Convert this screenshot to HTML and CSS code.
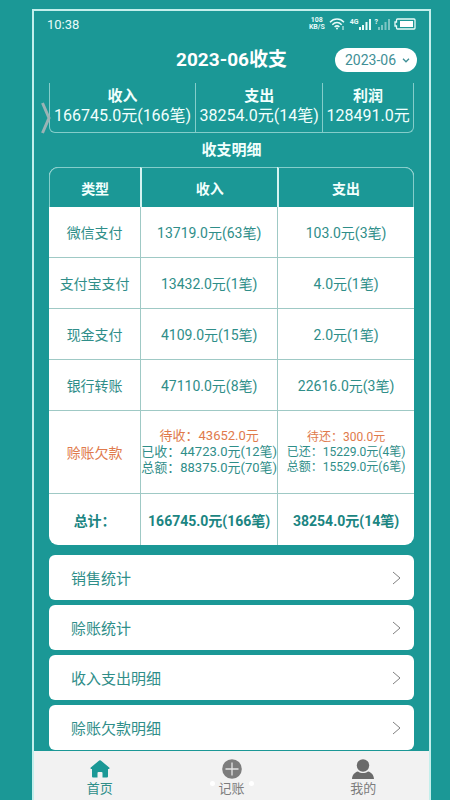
FILE: index.html
```html
<!DOCTYPE html>
<html lang="zh-CN">
<head>
  <meta charset="UTF-8">
  <meta name="viewport" content="width=device-width, initial-scale=1.0">
  <title>2023-06收支</title>
  <link rel="stylesheet" href="styles.css">
</head>
<body>
  <div class="phone">
    <div class="status-bar">
      <span class="time">10:38</span>
      <div class="status-icons">
        <div class="speed"><span>108</span><span>KB/S</span></div>
        <svg width="17" height="12" viewBox="0 0 17 12" fill="none" stroke="#e9fbf9" stroke-width="1.5">
          <path d="M1 4.2C5 0 11 0 15 4.2M3.3 6.7c2.8-2.8 6.6-2.8 9.4 0M5.6 9c1.4-1.4 3.4-1.4 4.8 0"/>
          <circle cx="8" cy="10.6" r="1" fill="#e9fbf9" stroke="none"/>
          <path d="M14 8v4" stroke-width="1"/>
        </svg>
        <div class="signal">
          <span>4G</span>
          <svg width="12" height="11" viewBox="0 0 12 11" fill="#e9fbf9">
            <path d="M0 8h2v3H0zM3 6h2v5H3zM6.5 3h2v8h-2zM10 0h2v11h-2z"/>
          </svg>
        </div>
        <div class="signal">
          <span>?</span>
          <svg width="12" height="11" viewBox="0 0 12 11" fill="#7cc5c3">
            <path d="M0 8h2v3H0zM3 6h2v5H3zM6.5 3h2v8h-2zM10 0h2v11h-2z"/>
          </svg>
        </div>
        <svg width="22" height="12" viewBox="0 0 22 12">
          <path d="M3.5 1H20a1 1 0 0 1 1 1v8a1 1 0 0 1-1 1H3.5a1 1 0 0 1-1-1V8H1V4h1.500V2a1 1 0 0 1 1-1z" fill="none" stroke="#e9fbf9" stroke-width="1.3"/>
          <path d="M6 3h13v6H6z" fill="#fff"/>
        </svg>
      </div>
    </div>

    <header class="header">
      <h1>2023-06收支</h1>
      <div class="month">
        <select aria-label="月份">
          <option>2023-06</option>
        </select>
        <svg width="8" height="5" viewBox="0 0 8 5" fill="none" stroke="#3f8f96" stroke-width="1.3">
          <path d="M1 .8l3 3 3-3"/>
        </svg>
      </div>
    </header>

    <main class="content">
      <section class="summary">
        <div class="summary-item"><h2>收入</h2><p>166745.0元(166笔)</p></div>
        <div class="summary-item"><h2>支出</h2><p>38254.0元(14笔)</p></div>
        <div class="summary-item"><h2>利润</h2><p>128491.0元</p></div>
        <button class="drawer" aria-label="展开">
          <svg width="10" height="32" viewBox="0 0 10 32" fill="none" stroke="#9bb3b5" stroke-width="3">
            <path d="M1.500 1l6.500 15-6.500 15"/>
          </svg>
        </button>
      </section>

      <h2 class="section-title">收支明细</h2>

      <table class="detail">
        <thead>
          <tr><th class="type">类型</th><th>收入</th><th>支出</th></tr>
        </thead>
        <tbody>
          <tr><td>微信支付</td><td>13719.0元(63笔)</td><td>103.0元(3笔)</td></tr>
          <tr><td>支付宝支付</td><td>13432.0元(1笔)</td><td>4.0元(1笔)</td></tr>
          <tr><td>现金支付</td><td>4109.0元(15笔)</td><td>2.0元(1笔)</td></tr>
          <tr><td>银行转账</td><td>47110.0元(8笔)</td><td>22616.0元(3笔)</td></tr>
          <tr class="debt">
            <td class="due">赊账欠款</td>
            <td class="income"><p class="due">待收：43652.0元</p><p>已收：44723.0元(12笔)</p><p>总额：88375.0元(70笔)</p></td>
            <td class="expense"><p class="due">待还：300.0元</p><p>已还：15229.0元(4笔)</p><p>总额：15529.0元(6笔)</p></td>
          </tr>
          <tr class="total"><td>总计：</td><td>166745.0元(166笔)</td><td>38254.0元(14笔)</td></tr>
        </tbody>
      </table>

      <nav class="links">
        <a href="#"><span>销售统计</span><svg width="9" height="14" viewBox="0 0 9 14"><path d="M1 1l7 6-7 6"/></svg></a>
        <a href="#"><span>赊账统计</span><svg width="9" height="14" viewBox="0 0 9 14"><path d="M1 1l7 6-7 6"/></svg></a>
        <a href="#"><span>收入支出明细</span><svg width="9" height="14" viewBox="0 0 9 14"><path d="M1 1l7 6-7 6"/></svg></a>
        <a href="#"><span>赊账欠款明细</span><svg width="9" height="14" viewBox="0 0 9 14"><path d="M1 1l7 6-7 6"/></svg></a>
      </nav>
    </main>

    <nav class="tabs">
      <a href="#" class="active">
        <svg width="20" height="20" viewBox="0 0 20 20" fill="#1b9896">
          <path d="M9.2 1.5a1.2 1.2 0 0 1 1.6 0l8.4 7c.7.6.3 1.5-.5 1.5H18v7.500a1 1 0 0 1-1 1h-4.500V14a1 1 0 0 0-1-1h-3a1 1 0 0 0-1 1v4.500H3a1 1 0 0 1-1-1V10h-.7c-.8 0-1.200-.9-.5-1.500z"/>
        </svg>
        <span>首页</span>
      </a>
      <a href="#">
        <svg width="20" height="20" viewBox="0 0 20 20">
          <circle cx="10" cy="10" r="9.8" fill="#7d7d7d"/>
          <path d="M10 3.5v13M3.5 10h13" stroke="#e4e4e4" stroke-width="1.3"/>
        </svg>
        <span>记账</span>
      </a>
      <a href="#">
        <svg width="22" height="20" viewBox="0 0 22 20" fill="#6b6b6b">
          <circle cx="11" cy="6.5" r="6.2"/>
          <path d="M0 20c.3-4 2.500-6.800 6-7.500 3 2 7 2 10 0 3.500.7 5.700 3.500 6 7.500z"/>
        </svg>
        <span>我的</span>
      </a>
      <div class="dots"><i></i><i></i></div>
    </nav>
  </div>
</body>
</html>
```

FILE: styles.css
```css
* {
  box-sizing: border-box;
}
body {
  margin: 0;
  height: 100vh;
  padding: 9px 19px 0 32px;
  background-color: #1b9896;
  color: #2f8e89;
  font-family: Roboto, "Noto Sans CJK SC", sans-serif;
  font-size: 14px;
}
h1, h2, p {
  margin: 0;
}
a {
  color: inherit;
  text-decoration: none;
}
.phone {
  display: flex;
  flex-direction: column;
  height: 100%;
  border: 2px solid #c3efec;
  border-bottom: none;
}

/* status bar */
.status-bar {
  display: flex;
  justify-content: space-between;
  align-items: center;
  height: 26px;
  padding: 0 13px;
  color: #e9fbf9;
}
.time {
  font-size: 13px;
}
.status-icons {
  display: flex;
  align-items: center;
  gap: 4px;
}
.speed {
  display: flex;
  flex-direction: column;
  align-items: center;
  font-size: 7px;
  line-height: 7px;
  font-weight: bold;
}
.signal {
  display: flex;
  align-items: flex-start;
}
.signal span {
  font-size: 7px;
  line-height: 6px;
  font-weight: bold;
}

/* header */
.header {
  display: grid;
  grid-template-columns: 1fr auto 1fr;
  align-items: center;
  height: 46px;
  padding: 0 12px;
  color: #fff;
}
.header h1 {
  grid-column: 2;
  font-size: 19px;
  line-height: 26px;
}
.month {
  position: relative;
  justify-self: end;
}
.month select {
  appearance: none;
  width: 82px;
  height: 24px;
  padding: 0 10px;
  border: none;
  border-radius: 12px;
  background-color: #fff;
  color: #3f8f96;
  font-family: inherit;
  font-size: 14px;
}
.month svg {
  position: absolute;
  right: 7px;
  top: 10px;
  pointer-events: none;
}

/* content */
.content {
  flex: 1;
  min-height: 0;
  padding: 0 15px;
  overflow: hidden;
}
.summary {
  position: relative;
  display: grid;
  grid-template-columns: 40% 35% 25%;
  height: 50px;
  border: 1px solid #84cdca;
  border-top: none;
  border-radius: 0 0 6px 6px;
  color: #f1fffd;
  text-align: center;
}
.summary-item {
  padding-top: 3px;
  white-space: nowrap;
}
.summary-item + .summary-item {
  border-left: 1px solid #84cdca;
}
.summary h2 {
  font-size: 15px;
  line-height: 20px;
}
.summary p {
  font-size: 16px;
  line-height: 19px;
}
.drawer {
  position: absolute;
  left: -9px;
  top: 19px;
  padding: 0;
  border: none;
  background: none;
}
.drawer svg {
  display: block;
}
.section-title {
  font-size: 15px;
  line-height: 34px;
  text-align: center;
  color: #f1fffd;
}

.detail {
  width: 100%;
  table-layout: fixed;
  border-collapse: separate;
  border-spacing: 0;
  border-radius: 9px;
  overflow: hidden;
  background-color: #fff;
  text-align: center;
}
.detail th {
  height: 40px;
  padding: 0;
  border-top: 1px solid #84cdca;
  border-left: 2px solid #d5f3f1;
  background-color: #1b9896;
  color: #f1fffd;
}
.detail .type {
  width: 25%;
  border-left: 1px solid #84cdca;
  border-top-left-radius: 9px;
}
.detail th:last-child {
  border-right: 1px solid #84cdca;
  border-top-right-radius: 9px;
}
.detail td {
  height: 51px;
  padding: 0;
  border-left: 1px solid #9fc9c5;
  border-bottom: 1px solid #9fc9c5;
  white-space: nowrap;
}
.detail td:first-child {
  border-left: none;
}
.detail .debt td {
  height: 83px;
}
.detail .due {
  color: #e07a4c;
}
.income {
  font-size: 13px;
  line-height: 16px;
}
.expense {
  font-size: 12px;
  line-height: 15px;
}
.detail .total td {
  border-bottom: none;
  color: #1b8582;
  font-weight: bold;
}

.links {
  display: flex;
  flex-direction: column;
  gap: 5px;
  margin-top: 10px;
}
.links a {
  display: flex;
  justify-content: space-between;
  align-items: center;
  height: 45px;
  padding: 0 13px 0 22px;
  border-radius: 6px;
  background-color: #fff;
  font-size: 15px;
}
.links svg {
  fill: none;
  stroke: #808080;
}

/* bottom tabs */
.tabs {
  position: relative;
  display: flex;
  height: 49px;
  background-color: #f2f2f2;
  color: #7d7d7d;
}
.tabs a {
  flex: 1;
  display: flex;
  flex-direction: column;
  align-items: center;
  padding-top: 8px;
  font-size: 13px;
  line-height: 20px;
}
.tabs .active {
  color: #2f8e89;
}
.dots {
  position: absolute;
  left: 0;
  right: 0;
  bottom: 14px;
  display: flex;
  justify-content: center;
  gap: 34px;
  pointer-events: none;
}
.dots i {
  width: 5px;
  height: 5px;
  border-radius: 50%;
  background-color: #fff;
}
```
